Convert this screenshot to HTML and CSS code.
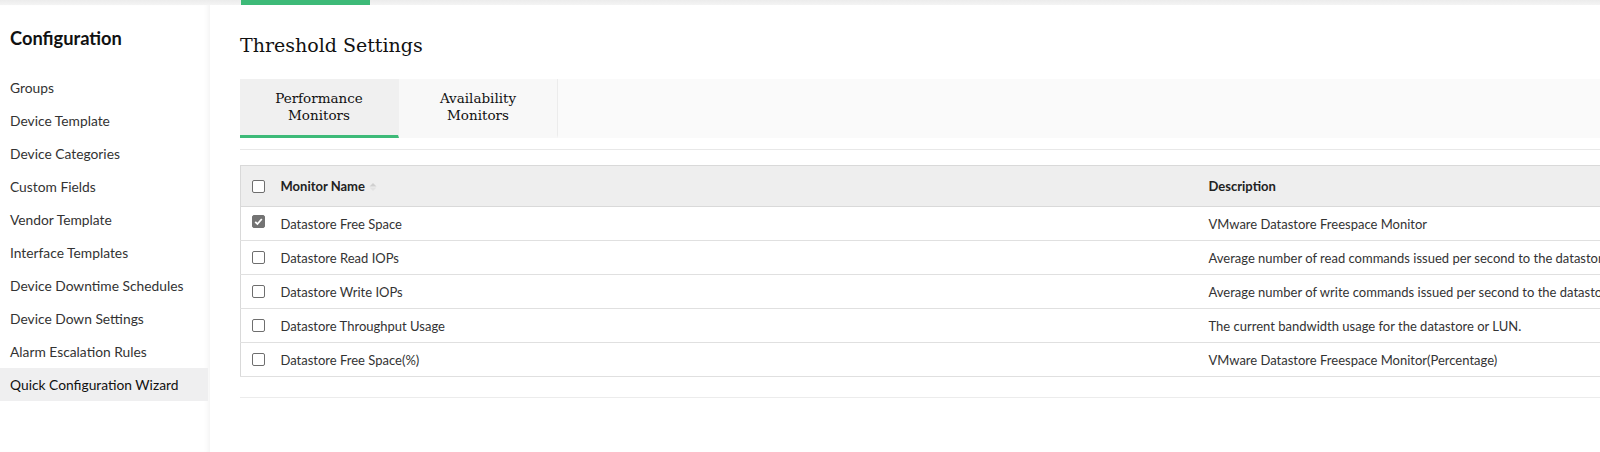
FILE: index.html
```html
<!DOCTYPE html>
<html>
<head>
<meta charset="utf-8">
<link rel="stylesheet" href="styles.css">
</head>
<body>
<div class="topstrip"><div class="topstrip-active"></div></div>
<div class="layout">
  <aside class="sidebar">
    <h2 class="side-title">Configuration</h2>
    <ul class="side-list">
      <li class="side-item">Groups</li>
      <li class="side-item">Device Template</li>
      <li class="side-item">Device Categories</li>
      <li class="side-item">Custom Fields</li>
      <li class="side-item">Vendor Template</li>
      <li class="side-item">Interface Templates</li>
      <li class="side-item">Device Downtime Schedules</li>
      <li class="side-item">Device Down Settings</li>
      <li class="side-item">Alarm Escalation Rules</li>
      <li class="side-item active">Quick Configuration Wizard</li>
    </ul>
  </aside>
  <main class="main">
    <h1 class="page-title">Threshold Settings</h1>
    <div class="tabs">
      <div class="tab selected">Performance Monitors</div>
      <div class="tab">Availability Monitors</div>
    </div>
    <div class="divider"></div>
    <table class="grid">
      <thead>
        <tr>
          <th class="cb-cell"><span class="cb"></span></th>
          <th class="name-cell">Monitor Name <svg class="sort" width="8" height="10" viewBox="0 0 8 10"><path d="M4 1 L7.5 4.5 L0.5 4.5 Z" fill="#cfcfcf"/><path d="M4 9 L7.5 5.5 L0.5 5.5 Z" fill="#e2e2e2"/></svg></th>
          <th class="desc-cell">Description</th>
        </tr>
      </thead>
      <tbody>
        <tr>
          <td class="cb-cell"><span class="cb checked"><svg width="11" height="11" viewBox="0 0 11 11"><path d="M2.2 5.8 L4.4 8 L8.8 3" fill="none" stroke="#fff" stroke-width="1.8"/></svg></span></td>
          <td class="name-cell">Datastore Free Space</td>
          <td class="desc-cell">VMware Datastore Freespace Monitor</td>
        </tr>
        <tr>
          <td class="cb-cell"><span class="cb"></span></td>
          <td class="name-cell">Datastore Read IOPs</td>
          <td class="desc-cell">Average number of read commands issued per second to the datastore</td>
        </tr>
        <tr>
          <td class="cb-cell"><span class="cb"></span></td>
          <td class="name-cell">Datastore Write IOPs</td>
          <td class="desc-cell">Average number of write commands issued per second to the datastore</td>
        </tr>
        <tr>
          <td class="cb-cell"><span class="cb"></span></td>
          <td class="name-cell">Datastore Throughput Usage</td>
          <td class="desc-cell">The current bandwidth usage for the datastore or LUN.</td>
        </tr>
        <tr>
          <td class="cb-cell"><span class="cb"></span></td>
          <td class="name-cell">Datastore Free Space(%)</td>
          <td class="desc-cell">VMware Datastore Freespace Monitor(Percentage)</td>
        </tr>
      </tbody>
    </table>
    <div class="divider bottom"></div>
  </main>
</div>
</body>
</html>
```
FILE: styles.css
```css
html, body {
  margin: 0;
  padding: 0;
  background: #ffffff;
  width: 1600px;
  height: 452px;
  overflow: hidden;
  font-family: Lato, "Open Sans", sans-serif;
  color: #333;
}
.topstrip {
  height: 5px;
  background: linear-gradient(#ececec, #f4f4f4);
  padding-left: 241px;
}
.topstrip-active {
  width: 129px;
  height: 5px;
  background: #3dba78;
}
.layout {
  display: flex;
  height: 447px;
}
.sidebar {
  width: 210px;
  flex: none;
  background: #fff;
  box-shadow: inset -5px 0 5px -3px rgba(0,0,0,0.05);
}
.side-title {
  margin: 0;
  padding: 21px 0 0 10px;
  height: 45px;
  font-size: 18.3px;
  line-height: 24px;
  font-weight: 700;
  color: #111;
}
.side-list {
  list-style: none;
  margin: 0;
  padding: 0;
}
.side-item {
  height: 33px;
  line-height: 33px;
  padding-left: 10px;
  font-size: 13.8px;
  color: #333;
  margin-right: 2px;
}
.side-item.active {
  background: #efeff0;
  color: #111;
}
.main {
  flex: 1;
  min-width: 0;
  overflow: hidden;
  padding-left: 30px;
}
.page-title {
  margin: 0;
  padding-top: 28px;
  height: 45px;
  box-sizing: border-box;
  font-family: "DejaVu Serif", serif;
  font-weight: 400;
  font-size: 19px;
  line-height: 24px;
  color: #111;
}
.tabs {
  margin-top: 29px;
  display: flex;
  height: 59px;
  background: #fafafa;
}
.tab {
  width: 159px;
  box-sizing: border-box;
  padding: 0 20px;
  display: flex;
  align-items: center;
  justify-content: center;
  text-align: center;
  font-family: "DejaVu Serif", serif;
  font-size: 13.5px;
  line-height: 17px;
  color: #111;
  background: #f8f8f8;
  border-right: 1px solid #ececec;
  border-bottom: 3px solid transparent;
}
.tab.selected {
  background: #f0f0f0;
  border-bottom-color: #3dba78;
  border-right-color: #f0f0f0;
}
.divider {
  height: 1px;
  background: #e8e8e8;
  margin-top: 11px;
}
.divider.bottom {
  margin-top: 20px;
  background: #ececec;
}
.grid {
  margin-top: 15px;
  width: 1600px;
  border-collapse: collapse;
  border: 1px solid #d9d9d9;
  font-size: 13px;
}
.grid th {
  background: #eeeeee;
  height: 40px;
  text-align: left;
  font-weight: 700;
  color: #222;
  padding: 0 12px 0 10px;
  border-bottom: 1px solid #d9d9d9;
}
.grid td {
  height: 33px;
  padding: 0 12px 0 10px;
  color: #333;
  border-bottom: 1px solid #e0e0e0;
  white-space: nowrap;
}
.grid .cb-cell {
  width: 30px;
  box-sizing: border-box;
  padding: 0 0 0 11px;
}
.grid .name-cell {
  width: 902px;
}
.grid .desc-cell {
  padding-left: 14px;
}
.cb {
  display: block;
  width: 11px;
  height: 11px;
  border: 1px solid #6e6e6e;
  border-radius: 2px;
  background: #fff;
}
.cb.checked {
  background: #737373;
  border-color: #737373;
  position: relative;
  top: -2px;
}
.cb.checked svg {
  display: block;
}
.sort {
  vertical-align: -1px;
  margin-left: 1px;
}
```
